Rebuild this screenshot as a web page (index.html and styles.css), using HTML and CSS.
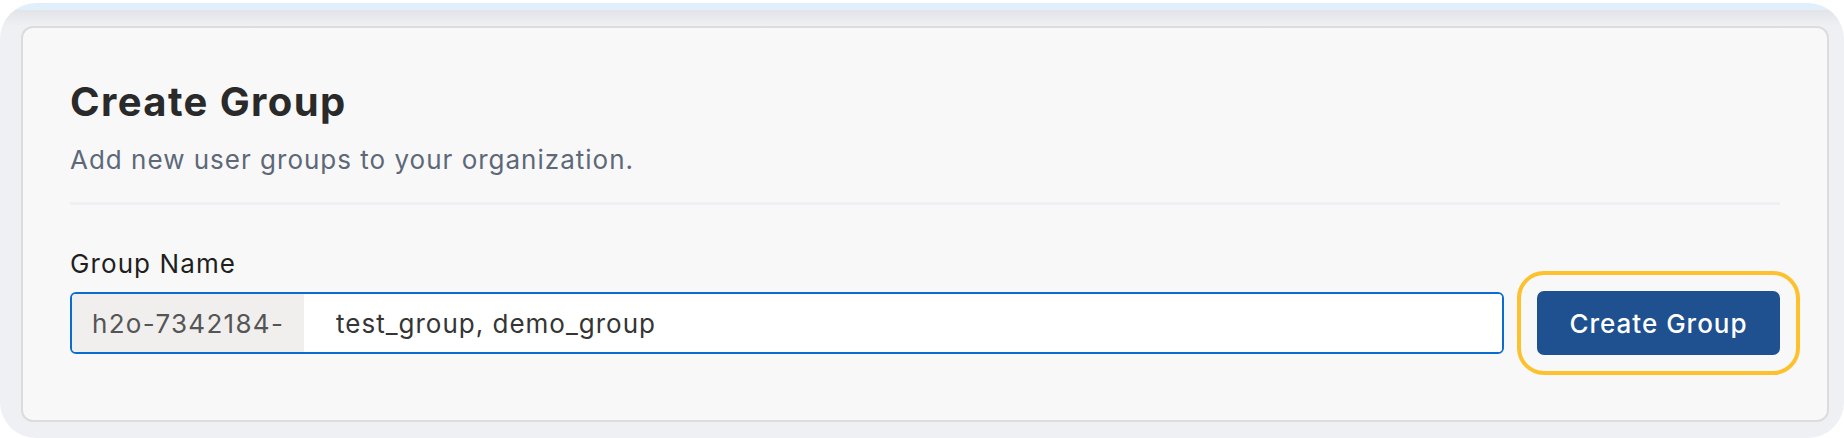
FILE: index.html
```html
<!DOCTYPE html>
<html lang="en">
<head>
<meta charset="utf-8">
<title>Create Group</title>
<link rel="stylesheet" href="styles.css">
</head>
<body>
<div class="frame">
  <section class="card">
    <h1 class="title">Create Group</h1>
    <p class="subtitle">Add new user groups to your organization.</p>
    <hr class="divider">
    <label class="label" for="group-name">Group Name</label>
    <div class="row">
      <div class="field">
        <span class="prefix">h2o-7342184-</span>
        <input id="group-name" class="input" type="text" value="test_group, demo_group">
      </div>
      <button class="btn" type="button">Create Group</button>
    </div>
  </section>
</div>
</body>
</html>
```

FILE: styles.css
```css
* { box-sizing: border-box; }

html, body {
  margin: 0;
  padding: 0;
  background: #ffffff;
  font-family: Inter, "Noto Sans", "Liberation Sans", sans-serif;
}

.frame {
  margin-top: 3px;
  height: 435px;
  border-radius: 36px;
  background: linear-gradient(to bottom, #e1eefc 0, #e1eefc 7px, #e3e4e8 7px, #eff0f4 23px, #eff0f4 100%);
  padding: 23px 15px 16px 21px;
}

.card {
  height: 396px;
  background: #f8f8f8;
  border: 2px solid #dcdcdc;
  border-radius: 12px;
  padding: 50px 47px 0 47px;
}

.title {
  margin: 0;
  font-size: 40px;
  line-height: 48px;
  font-weight: 700;
  color: #2a2a2a;
  letter-spacing: 1.4px;
}

.subtitle {
  margin: 18px 0 0 0;
  font-size: 26px;
  line-height: 32px;
  font-weight: 400;
  color: #5d6878;
  letter-spacing: 1px;
}

.divider {
  margin: 26px 0 0 0;
  border: 0;
  height: 3px;
  background: #eef0f3;
}

.label {
  display: block;
  margin-top: 43px;
  font-size: 26px;
  line-height: 32px;
  color: #1f1f1f;
  letter-spacing: 1.1px;
}

.row {
  display: flex;
  align-items: center;
  margin-top: 11px;
}

.field {
  flex: 1;
  display: flex;
  height: 62px;
  border: 2px solid #0a6bd0;
  border-radius: 6px;
  background: #ffffff;
  overflow: hidden;
}

.prefix {
  display: flex;
  align-items: center;
  width: 232px;
  padding: 0 0 0 20px;
  background: #f0efed;
  color: #555555;
  font-size: 26px;
  letter-spacing: 1.3px;
  white-space: nowrap;
}

.input {
  flex: 1;
  border: 0;
  outline: none;
  padding: 0 0 0 32px;
  font-family: inherit;
  font-size: 26px;
  letter-spacing: 1px;
  color: #353535;
  background: #ffffff;
}

.btn {
  margin-left: 33px;
  width: 243px;
  height: 64px;
  border: 0;
  border-radius: 7px;
  background: #1f5090;
  color: #ffffff;
  font-family: inherit;
  font-size: 26px;
  font-weight: 500;
  letter-spacing: 1px;
  outline: 4px solid #fcc12d;
  outline-offset: 16px;
}
```
